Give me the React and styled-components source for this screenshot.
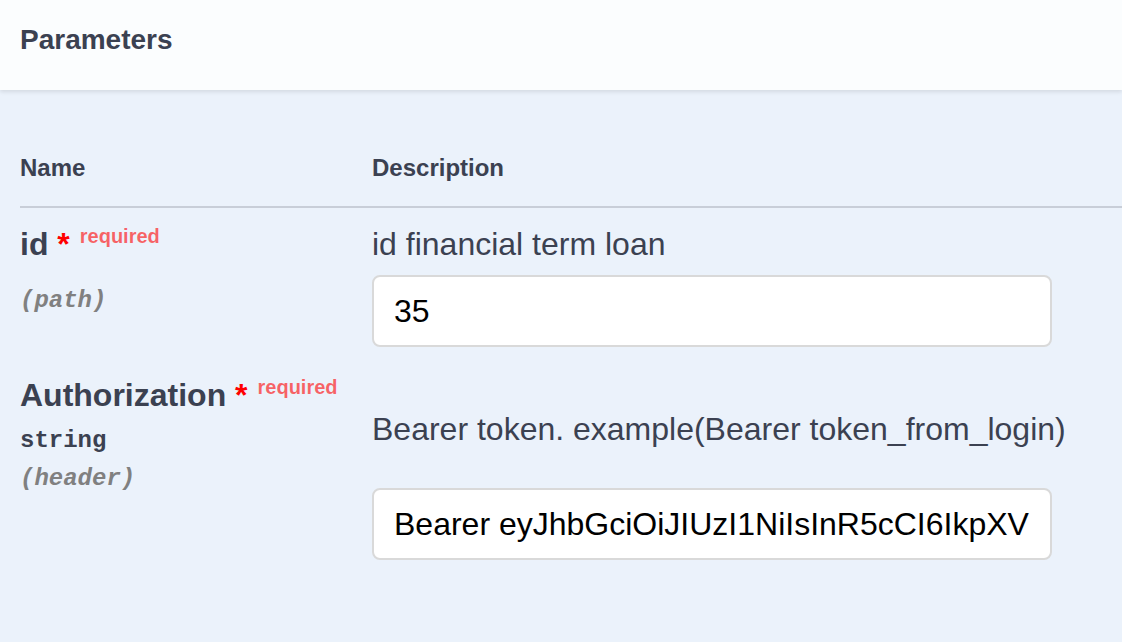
import * as React from 'react';
import styled, { createGlobalStyle } from 'styled-components';

const GlobalStyle = createGlobalStyle`
  html, body {
    margin: 0;
    padding: 0;
    background: #ebf2fb;
  }
  body {
    font-family: "Liberation Sans", Arial, sans-serif;
    color: #3b4151;
  }
`;

const Page = styled.div`
  width: 1122px;
  height: 642px;
  overflow: hidden;
  background: #ebf2fb;
`;

const SectionHeader = styled.div`
  display: flex;
  align-items: center;
  height: 90px;
  box-sizing: border-box;
  padding: 0 20px 10px;
  background: rgba(255, 255, 255, 0.8);
  box-shadow: 0 2px 4px rgba(0, 0, 0, 0.1);
  position: relative;
`;

const Title = styled.h4`
  margin: 0;
  font-size: 28px;
  font-weight: 700;
  color: #3b4151;
`;

const Table = styled.div`
  padding-left: 20px;
`;

const HeadRow = styled.div`
  display: grid;
  grid-template-columns: 352px 1fr;
  padding: 64px 0 24px;
  border-bottom: 2px solid rgba(59, 65, 81, 0.2);
`;

const HeadCell = styled.div`
  font-size: 24px;
  font-weight: 700;
  line-height: 28px;
`;

const Row = styled.div`
  display: grid;
  grid-template-columns: 352px 1fr;
  align-items: start;
  padding: 15px 0 12px;
`;

const NameCol = styled.div`
  display: flex;
  flex-direction: column;
`;

const NameLine = styled.div`
  font-size: 32px;
  font-weight: 700;
  line-height: 42px;
  white-space: nowrap;
`;

const Star = styled.span`
  color: #ff0000;
`;

const Required = styled.span`
  position: relative;
  top: -12px;
  padding: 10px;
  font-size: 20px;
  font-weight: 700;
  color: rgba(255, 0, 0, 0.6);
`;

const TypeText = styled.div`
  padding: 7px 0 10px;
  font-family: "Liberation Mono", "Courier New", monospace;
  font-size: 24px;
  font-weight: 700;
  line-height: 28px;
  color: #3b4151;
  &:empty {
    height: 0;
    padding: 8px 0 10px;
  }
`;

const InText = styled.div`
  font-family: "Liberation Mono", "Courier New", monospace;
  font-size: 24px;
  font-weight: 700;
  font-style: italic;
  line-height: 28px;
  color: #808080;
`;

const DescCol = styled.div`
  display: flex;
  flex-direction: column;
`;

const Desc = styled.p`
  margin: ${(p) => (p.$markdown ? '34px 0 38px' : '0 0 10px')};
  font-size: 32px;
  line-height: 42px;
  color: #3b4151;
  white-space: nowrap;
`;

const TextInput = styled.input`
  width: 680px;
  height: 72px;
  box-sizing: border-box;
  margin: 0;
  padding: 0 20px;
  border: 2px solid #d9d9d9;
  border-radius: 8px;
  background: #fff;
  font-family: "Liberation Sans", Arial, sans-serif;
  font-size: 32px;
  color: #000;
  outline: none;
`;

const params = [
  {
    name: 'id',
    type: '',
    location: '(path)',
    description: 'id financial term loan',
    markdown: false,
    value: '35',
  },
  {
    name: 'Authorization',
    type: 'string',
    location: '(header)',
    description: 'Bearer token. example(Bearer token_from_login)',
    markdown: true,
    value:
      'Bearer eyJhbGciOiJIUzI1NiIsInR5cCI6IkpXVCJ9.eyJzdWIiOiIxMjM0NTY3ODkwIiwibmFtZSI6IkpvaG4ifQ',
  },
];

export default function App() {
  return (
    <Page>
      <GlobalStyle />
      <SectionHeader>
        <Title>Parameters</Title>
      </SectionHeader>
      <Table>
        <HeadRow>
          <HeadCell>Name</HeadCell>
          <HeadCell>Description</HeadCell>
        </HeadRow>
        {params.map((p) => (
          <Row key={p.name}>
            <NameCol>
              <NameLine>
                {p.name}
                <Star>&nbsp;*</Star>
                <Required>required</Required>
              </NameLine>
              <TypeText>{p.type}</TypeText>
              <InText>{p.location}</InText>
            </NameCol>
            <DescCol>
              <Desc $markdown={p.markdown}>{p.description}</Desc>
              <TextInput type="text" defaultValue={p.value} />
            </DescCol>
          </Row>
        ))}
      </Table>
    </Page>
  );
}
